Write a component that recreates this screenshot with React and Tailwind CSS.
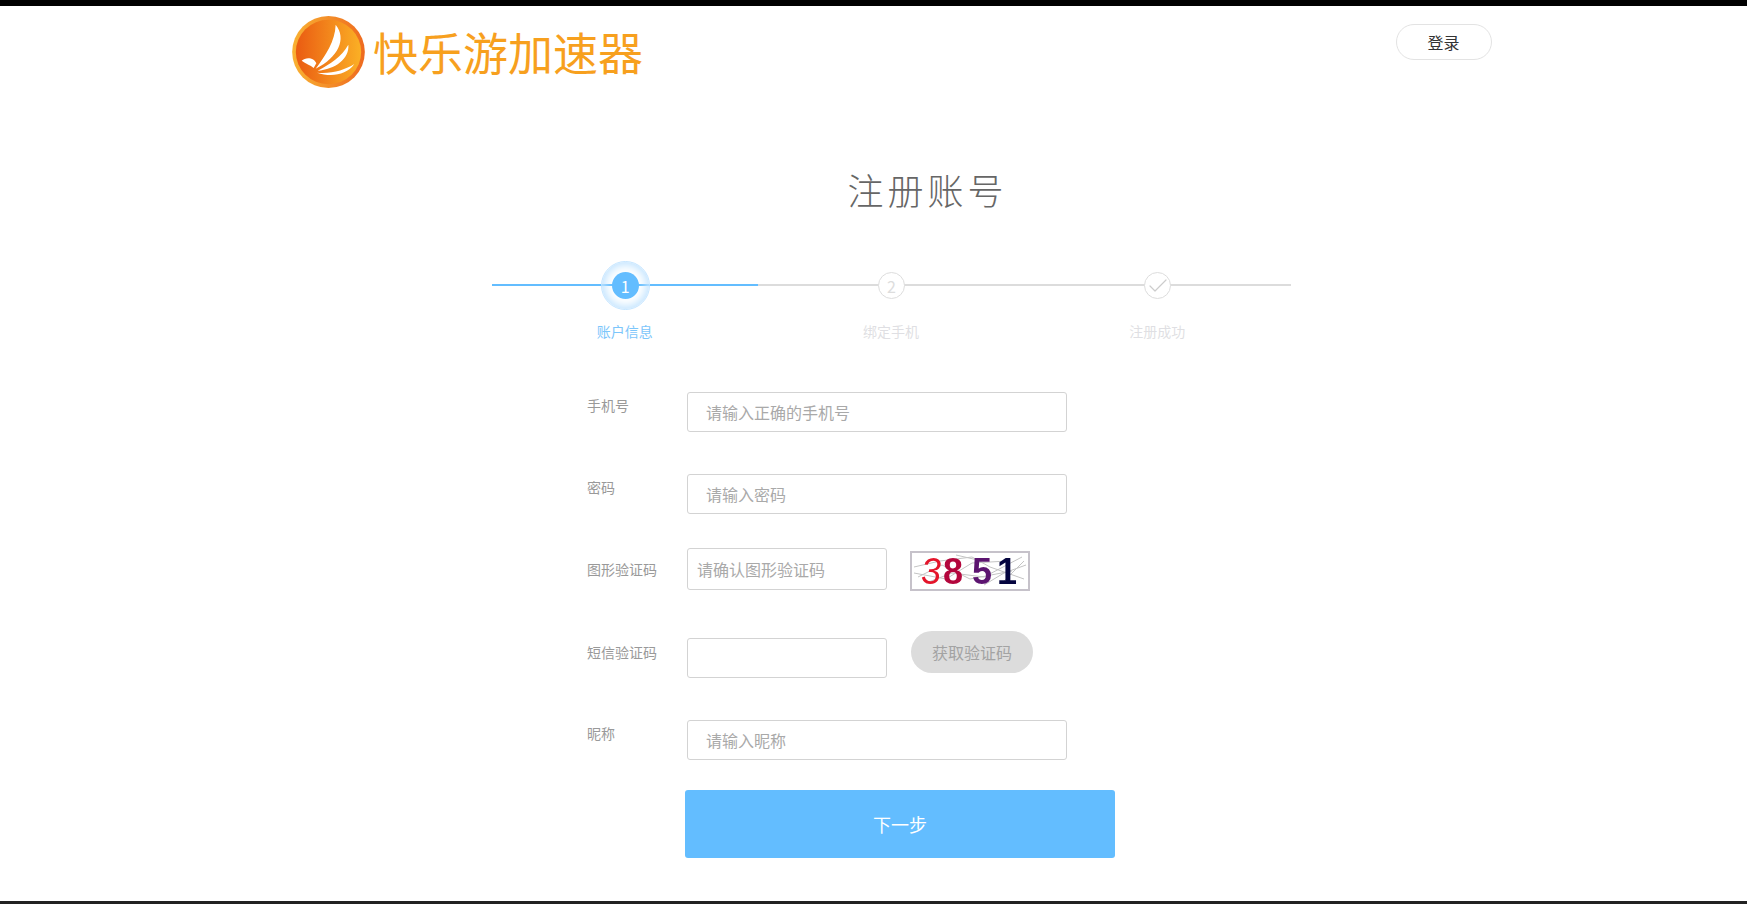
import { Check } from "lucide-react";

function Logo() {
  return (
    <svg width="73" height="72" viewBox="21 24 219 216" className="shrink-0">
      <defs>
        <linearGradient id="disc" x1="0" y1="0" x2="1" y2="0">
          <stop offset="0" stopColor="#ea5b12" />
          <stop offset="1" stopColor="#fbb025" />
        </linearGradient>
        <linearGradient id="rim" x1="0" y1="0" x2="1" y2="0">
          <stop offset="0" stopColor="#f9b233" />
          <stop offset="1" stopColor="#ee6a1f" />
        </linearGradient>
      </defs>
      <ellipse cx="130.5" cy="132" rx="109" ry="108" fill="url(#rim)" />
      <ellipse cx="130.5" cy="132" rx="98" ry="97" fill="url(#disc)" />
      <path d="M152 50 C186 92 160 148 92 182 C122 142 150 100 152 50 Z" fill="#fff" />
      <path d="M190 110 C194 152 150 184 98 188 C136 168 170 146 190 110 Z" fill="#fff" />
      <path d="M208 168 C184 202 138 208 96 194 C140 198 180 186 208 168 Z" fill="#fff" />
      <path d="M50 158 C62 146 88 148 94 166 L86 180 C76 170 62 168 50 158 Z" fill="#fff" />
    </svg>
  );
}

function Captcha() {
  return (
    <div className="relative w-[120px] h-[40px] mt-[3px] ml-[23px] border-2 border-[#c6c2ca] bg-white">
      <svg width="116" height="36" viewBox="0 0 116 36" className="absolute inset-0 blur-[0.4px]" fill="none" stroke="#c4c4c4" strokeWidth="1">
        <path d="M2 14 L28 8 L60 4 L78 14 L112 26" />
        <path d="M6 24 L30 12 L58 26 L100 18" />
        <path d="M14 30 L40 20 L72 24 L110 4" />
        <path d="M2 20 L34 26 L60 10 L96 8" />
        <path d="M72 32 L92 20 L114 12" />
        <path d="M90 30 L112 8" />
        <path d="M44 2 L70 8" />
      </svg>
      <div className="absolute left-0 top-[1px] flex items-center font-['Liberation_Sans',sans-serif] font-bold text-[36px] leading-[36px] blur-[0.5px]">
        <span className="ml-[9px] w-[22px] text-[#e4142a] italic font-normal">3</span>
        <span className="w-[20px] text-[#b3063c]">8</span>
        <span className="ml-[9px] w-[20px] text-[#5c1470]">5</span>
        <span className="ml-[5px] text-[#05053f]">1</span>
      </div>
    </div>
  );
}

function Step({ label, active, lineBlue, children }) {
  return (
    <div className="relative flex-1 flex flex-col items-center">
      <div className={`absolute left-0 right-0 top-[23px] h-[2px] ${lineBlue ? "bg-[#63bdff]" : "bg-[#dcdcdc]"}`} />
      <div className="relative h-[49px] w-[49px] flex items-center justify-center">
        {active && (
          <div className="absolute inset-0 rounded-full border border-[#c4e5ff] shadow-[inset_0_0_9px_3px_#c4e5ff]" />
        )}
        <div
          className={`relative w-[27px] h-[27px] rounded-full flex items-center justify-center text-[16px] ${
            active
              ? "bg-[#63bdff] text-white"
              : "bg-white border border-[#dddddd] text-[#dddddd]"
          }`}
        >
          {children}
        </div>
      </div>
      <div className={`mt-[11px] -ml-[1px] text-[14px] leading-[20px] ${active ? "text-[#7cc6fb]" : "text-[#dfdfe3]"}`}>
        {label}
      </div>
    </div>
  );
}

const inputCls =
  "h-[40px] rounded-[3px] border border-[#d3d3d3] bg-white text-[16px] outline-none placeholder:text-[#a9a9a9]";

export default function App() {
  return (
    <div className="h-[904px] overflow-hidden bg-white border-t-[6px] border-b-[3px] border-t-black border-b-[#222222] font-['Noto_Sans_CJK_SC',sans-serif]">
      <div className="ml-[292px] w-[1200px]">
        <header className="flex justify-between">
          <div className="flex items-start pt-[10px]">
            <Logo />
            <div className="ml-[8px] mt-[9px] text-[45px] leading-[54px] font-normal text-[#f7a01e] whitespace-nowrap">
              快乐游加速器
            </div>
          </div>
          <button className="mt-[18px] w-[96px] h-[36px] rounded-full border border-[#e3e3e3] bg-white text-[16px] text-[#333333]">
            <span className="-ml-[1px] block">登录</span>
          </button>
        </header>

        <h1 className="mt-[77px] pl-[71px] text-center text-[36px] leading-[48px] font-light tracking-[4px] text-[#666666]">
          注册账号
        </h1>

        <div className="mt-[48px] ml-[200px] w-[799px] flex">
          <Step label="账户信息" active lineBlue>1</Step>
          <Step label="绑定手机">2</Step>
          <Step label="注册成功">
            <Check size={24} strokeWidth={1.2} className="shrink-0 text-[#cccccc]" />
          </Step>
        </div>

        <form className="mt-[51px] ml-[295px] text-[14px]">
          <div className="flex">
            <label className="w-[100px] pt-[3px] leading-[20px] text-[#999999]">手机号</label>
            <input className={`${inputCls} w-[380px] px-[18px]`} placeholder="请输入正确的手机号" />
          </div>
          <div className="flex mt-[42px]">
            <label className="w-[100px] pt-[3px] leading-[20px] text-[#999999]">密码</label>
            <input className={`${inputCls} w-[380px] px-[18px]`} placeholder="请输入密码" />
          </div>
          <div className="flex mt-[34px]">
            <label className="w-[100px] pt-[11px] leading-[20px] text-[#999999]">图形验证码</label>
            <input className={`${inputCls} !h-[42px] w-[200px] px-[9px]`} placeholder="请确认图形验证码" />
            <Captcha />
          </div>
          <div className="flex mt-[40px]">
            <label className="w-[100px] pt-[11px] leading-[20px] text-[#999999]">短信验证码</label>
            <input className={`${inputCls} w-[200px] px-[9px] mt-[7px]`} />
            <button type="button" className="ml-[24px] w-[122px] h-[42px] rounded-full bg-[#dcdcdc] text-[16px] text-[#a3a3a3]">
              获取验证码
            </button>
          </div>
          <div className="flex mt-[42px]">
            <label className="w-[100px] pt-[3px] leading-[20px] text-[#999999]">昵称</label>
            <input className={`${inputCls} w-[380px] px-[18px]`} placeholder="请输入昵称" />
          </div>
          <button type="button" className="block mt-[30px] ml-[98px] w-[430px] h-[68px] rounded-[3px] bg-[#63bdff] text-[18px] text-white">
            下一步
          </button>
        </form>
      </div>
    </div>
  );
}
